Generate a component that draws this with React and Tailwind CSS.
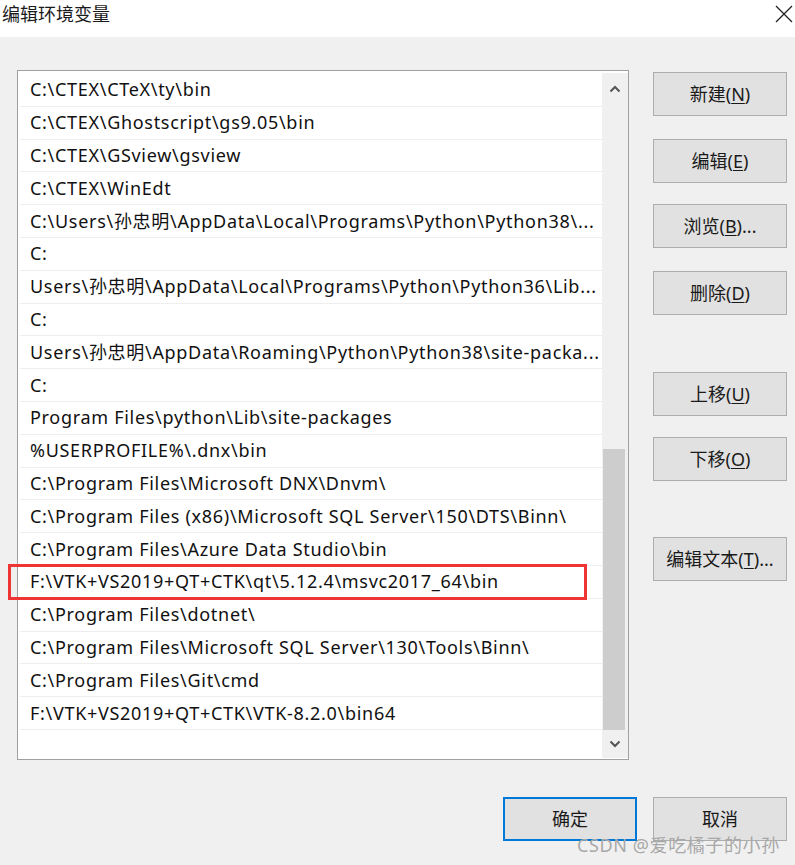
import { useState } from "react";

const paths = [
  "C:\\CTEX\\CTeX\\ty\\bin",
  "C:\\CTEX\\Ghostscript\\gs9.05\\bin",
  "C:\\CTEX\\GSview\\gsview",
  "C:\\CTEX\\WinEdt",
  "C:\\Users\\孙忠明\\AppData\\Local\\Programs\\Python\\Python38\\...",
  "C:",
  "Users\\孙忠明\\AppData\\Local\\Programs\\Python\\Python36\\Lib...",
  "C:",
  "Users\\孙忠明\\AppData\\Roaming\\Python\\Python38\\site-packa...",
  "C:",
  "Program Files\\python\\Lib\\site-packages",
  "%USERPROFILE%\\.dnx\\bin",
  "C:\\Program Files\\Microsoft DNX\\Dnvm\\",
  "C:\\Program Files (x86)\\Microsoft SQL Server\\150\\DTS\\Binn\\",
  "C:\\Program Files\\Azure Data Studio\\bin",
  "F:\\VTK+VS2019+QT+CTK\\qt\\5.12.4\\msvc2017_64\\bin",
  "C:\\Program Files\\dotnet\\",
  "C:\\Program Files\\Microsoft SQL Server\\130\\Tools\\Binn\\",
  "C:\\Program Files\\Git\\cmd",
  "F:\\VTK+VS2019+QT+CTK\\VTK-8.2.0\\bin64",
];

// label + underlined access key
function Btn({ label, accel, tail = "", primary = false, className = "" }) {
  return (
    <button
      className={`h-[44px] w-[134px] bg-[#e1e1e1] text-[18px] text-[#1a1a1a] flex items-center justify-center ${
        primary ? "border-2 border-[#0078d7]" : "border border-[#adadad]"
      } ${className}`}
    >
      {label}
      {accel && (
        <span>
          (<span className="underline underline-offset-2">{accel}</span>)
        </span>
      )}
      {tail}
    </button>
  );
}

export default function App() {
  const [selected] = useState(15);

  return (
    <div
      className="w-[795px] h-[865px] bg-[#f0f0f0] relative overflow-hidden"
      style={{ fontFamily: '"Noto Sans", "Noto Sans CJK SC", sans-serif' }}
    >
      {/* Title bar */}
      <div className="h-[37px] bg-white flex items-start justify-between pl-[2px] pr-[2px] pt-[1px]">
        <span className="text-[18px] leading-[26px] text-[#1a1a1a]">编辑环境变量</span>
        <svg width="18" height="18" viewBox="0 0 18 18" className="mt-[4px]">
          <path d="M1 1 L17 17 M17 1 L1 17" stroke="#222" strokeWidth="1.3" fill="none" />
        </svg>
      </div>

      <div className="flex pl-[17px] pt-[33px]">
        {/* List box */}
        <div className="w-[612px] h-[690px] border border-[#a0a0a0] bg-white flex">
          <div className="flex-1 pl-[2px] pt-[3px]">
            {paths.map((p, i) => (
              <div
                key={i}
                className="h-[32.8px] pl-[10px] flex items-center border-b border-[#eeeeee] text-[18px] tracking-[0.7px] text-[#111] whitespace-nowrap overflow-hidden"
              >
                {p}
              </div>
            ))}
          </div>
          {/* Scrollbar */}
          <div className="w-[26px] mt-[2px] mb-[1px] bg-[#f0f0f0] flex flex-col items-center">
            <svg width="12" height="8" viewBox="0 0 12 8" className="mt-[12px]">
              <path d="M1.5 6.5 L6 2 L10.5 6.5" stroke="#555" strokeWidth="2" fill="none" />
            </svg>
            <div className="flex-1" />
            <div className="w-[22px] h-[281px] bg-[#cdcdcd] ml-[-2px]" />
            <svg width="12" height="8" viewBox="0 0 12 8" className="mt-[10px] mb-[10px]">
              <path d="M1.5 1.5 L6 6 L10.5 1.5" stroke="#555" strokeWidth="2" fill="none" />
            </svg>
          </div>
        </div>

        {/* Side buttons */}
        <div className="ml-[24px] pt-[2px] flex flex-col">
          <Btn label="新建" accel="N" />
          <Btn label="编辑" accel="E" className="mt-[23px]" />
          <Btn label="浏览" accel="B" tail="..." className="mt-[21px]" />
          <Btn label="删除" accel="D" className="mt-[23px]" />
          <Btn label="上移" accel="U" className="mt-[57px]" />
          <Btn label="下移" accel="O" className="mt-[21px]" />
          <Btn label="编辑文本" accel="T" tail="..." className="mt-[56px]" />
        </div>
      </div>

      {/* Bottom buttons */}
      <div className="flex justify-end pr-[8px] mt-[37px] gap-[16px]">
        <Btn label="确定" primary className="w-[133px]" />
        <Btn label="取消" />
      </div>

      {/* Annotation box around selected entry */}
      <div
        className="absolute left-[8px] w-[579px] h-[36px] border-[3px] border-[#f03333] pointer-events-none"
        style={{ top: 74 + selected * 32.8 - 2 }}
      />

      {/* Watermark */}
      <div className="absolute left-[577px] top-[834px] text-[18px] leading-[22px] text-[#a8a8a8] whitespace-nowrap tracking-[0.6px]">
        CSDN @爱吃橘子的小孙
      </div>
    </div>
  );
}
